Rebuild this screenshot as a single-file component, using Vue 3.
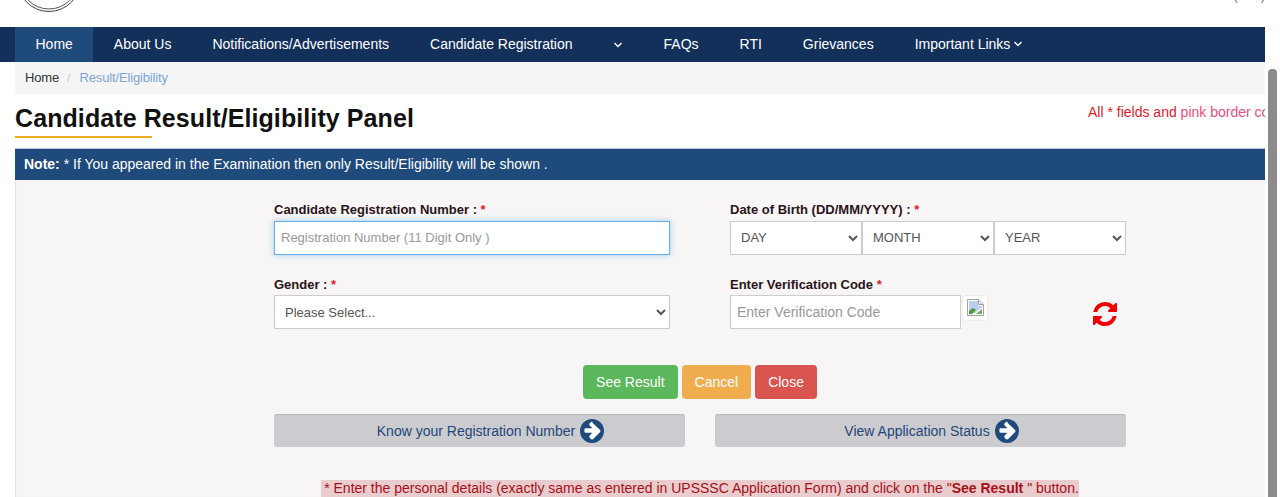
<template>
  <div class="page">
    <div class="content">
      <header class="top">
        <svg class="logo" width="60" height="14" viewBox="0 0 60 14">
          <circle cx="30" cy="-20" r="31.5" fill="none" stroke="#444" stroke-width="1" />
          <circle cx="30" cy="-20" r="29" fill="none" stroke="#555" stroke-width="1" />
        </svg>
        <span class="lang">( A+ )</span>
      </header>

      <nav class="nav">
        <a v-for="item in navItems" :key="item.label" :class="['nav-item', { active: item.active }]">
          {{ item.label }}
        </a>
        <a class="nav-item only-caret">
          <svg class="caret" width="10" height="6" viewBox="0 0 10 6">
            <path d="M1.500 1l3.500 3.500L8.500 1" fill="none" stroke="#fff" stroke-width="1.4" />
          </svg>
        </a>
        <a v-for="item in navItemsEnd" :key="item.label" class="nav-item">
          {{ item.label }}
          <svg v-if="item.caret" class="caret" width="10" height="6" viewBox="0 0 10 6">
            <path d="M1.500 1l3.500 3.500L8.500 1" fill="none" stroke="#fff" stroke-width="1.4" />
          </svg>
        </a>
      </nav>

      <div class="crumbs">
        <span class="crumb-home">Home</span>
        <span class="crumb-sep">/</span>
        <span class="crumb-here">Result/Eligibility</span>
      </div>

      <div class="title-row">
        <div class="title-block">
          <h1>Candidate Result/Eligibility Panel</h1>
        </div>
        <p class="mandatory">All * fields and <span>pink border color are mandatory</span></p>
      </div>

      <div class="note"><b>Note:</b> * If You appeared in the Examination then only Result/Eligibility will be shown .</div>

      <section class="panel">
        <div class="form-grid">
          <div class="field">
            <label>Candidate Registration Number : <i>*</i></label>
            <input class="ctl focused first" type="text" placeholder="Registration Number (11 Digit Only )" />
          </div>
          <div class="field">
            <label>Date of Birth (DD/MM/YYYY) : <i>*</i></label>
            <div class="dob">
              <select v-for="part in dobParts" :key="part" class="ctl first">
                <option>{{ part }}</option>
              </select>
            </div>
          </div>
          <div class="field">
            <label>Gender : <i>*</i></label>
            <select class="ctl">
              <option>Please Select...</option>
            </select>
          </div>
          <div class="field">
            <label>Enter Verification Code <i>*</i></label>
            <div class="captcha">
              <input class="ctl code" type="text" placeholder="Enter Verification Code" />
              <span class="broken">
                <svg width="17" height="17" viewBox="0 0 17 17">
                  <path d="M.5.5h11l5 5v11H.5z" fill="#fff" stroke="#a4a4a4" />
                  <path d="M11.5.5v5h5" fill="#e6e6e6" stroke="#a4a4a4" />
                  <path d="M2 2h9v5h4v1L8 14H2z" fill="#b9cdf1" />
                  <path d="M2 15v-3l4-3 3 2-4 4z" fill="#4c9a3e" />
                  <path d="M9 15l6-5v5z" fill="#6fae5c" />
                </svg>
              </span>
              <svg class="refresh" width="24" height="24" viewBox="0 0 1536 1536">
                <path fill="#f00000" d="M1511 928q0 5-1 7-64 268-268 434.5t-478 166.5q-146 0-282.5-55t-243.5-157l-129 129q-19 19-45 19t-45-19-19-45v-448q0-26 19-45t45-19h448q26 0 45 19t19 45-19 45l-137 137q71 66 161 102t187 36q134 0 250-65t186-179q11-17 53-117 8-23 30-23h192q13 0 22.5 9.5t9.5 22.5zm25-800v448q0 26-19 45t-45 19h-448q-26 0-45-19t-19-45 19-45l138-138q-148-137-349-137-134 0-250 65t-186 179q-11 17-53 117-8 23-30 23h-199q-13 0-22.5-9.5t-9.5-22.5v-7q65-268 270-434.5t480-166.5q146 0 284 55.5t245 156.5l130-129q19-19 45-19t45 19 19 45z" />
              </svg>
            </div>
          </div>
        </div>

        <div class="actions">
          <button class="btn green">See Result</button>
          <button class="btn orange">Cancel</button>
          <button class="btn red">Close</button>
        </div>

        <div class="links">
          <a v-for="link in links" :key="link" class="link-btn">
            {{ link }}
            <svg width="24" height="24" viewBox="0 0 25 25">
              <circle cx="12.5" cy="12.5" r="12.5" fill="#1f4a7c" />
              <path d="M13.500 4.500l7.500 7 .3 1-.3 1-7.500 7.500-1 .3-1-.3-1.600-1.600-.3-1 .3-1 3-3H6l-1-.4-.4-1v-2l.4-1 1-.4h6.900l-3-3-.3-1 .3-1 1.600-1.600 1-.3z" fill="#fff" />
            </svg>
          </a>
        </div>

        <p class="hint">
          <span>* Enter the personal details (exactly same as entered in UPSSSC Application Form) and click on the "<b>See Result</b> " button.</span>
        </p>
      </section>
    </div>
    <div class="scrollbar"></div>
  </div>
</template>

<script setup>
const navItems = [
  { label: 'Home', active: true },
  { label: 'About Us' },
  { label: 'Notifications/Advertisements' },
  { label: 'Candidate Registration' },
];
const navItemsEnd = [
  { label: 'FAQs' },
  { label: 'RTI' },
  { label: 'Grievances' },
  { label: 'Important Links', caret: true },
];
const dobParts = ['DAY', 'MONTH', 'YEAR'];
const links = ['Know your Registration Number', 'View Application Status'];
</script>

<style>
html, body { margin: 0; background: #fff; overflow: hidden; }
</style>

<style scoped>
.page {
  position: relative; width: 1280px; height: 497px; overflow: hidden;
  background: #fff; font-family: "Liberation Sans", Arial, sans-serif; color: #222;
}
.content { width: 1265px; height: 497px; overflow: hidden; }

.top { height: 27px; display: flex; justify-content: space-between; overflow: hidden; }
.logo { margin-left: 19px; }
.lang { margin-top: -12px; font-size: 13px; line-height: 15px; color: #777; height: 15px; white-space: nowrap; }

.nav { height: 35px; box-sizing: border-box; padding: 0 0 0 15px; background: #12305a; display: flex; font-size: 14px; color: #fff; }
.nav-item { display: flex; align-items: center; gap: 3px; padding: 0 20.5px 2px; white-space: nowrap; }
.nav-item.active { background: #1f4a7c; }
.nav-item.only-caret { padding: 0 20px; }

.crumbs {
  margin-left: 15px; height: 32px; box-sizing: border-box; background: #f5f5f5; display: flex; align-items: center;
  padding: 0 0 2px 10px; font-size: 13px; letter-spacing: -0.15px;
}
.crumb-home { color: #333; }
.crumb-sep { color: #ccc; margin: 0 9px 0 8px; }
.crumb-here { color: #7fa3d8; }

.title-row { margin-left: 15px; height: 54px; display: flex; justify-content: space-between; }
.title-block { height: 43px; position: relative; }
.title-block::after {
  content: ""; position: absolute; left: 0; top: 42px; width: 137px; height: 2px; background: #eeaa22;
}
h1 { margin: 0; padding-top: 9px; font-size: 25px; line-height: 30px; font-weight: 700; color: #111; letter-spacing: 0.09px; white-space: nowrap; }
.mandatory { margin: 0; padding-top: 10px; font-size: 14px; line-height: 16px; color: #e2202c; white-space: nowrap; width: 177px; overflow: hidden; flex: none; }
.mandatory span { color: #e5517f; }

.note {
  margin-left: 15px; height: 32px; line-height: 31px; padding-left: 9px;
  background: #1f4a7c; color: #fff; font-size: 14px; border-top: 1px solid #b6c6d6; box-sizing: border-box;
}
.panel {
  margin-left: 15px; height: 317px; background: #f7f5f5; padding: 22px 139px 0 259px; box-sizing: border-box;
  box-shadow: inset 1px 0 1px #e4e2e2;
}

.form-grid { display: grid; grid-template-columns: 396px 396px; column-gap: 60px; row-gap: 22px; }
.field { display: flex; flex-direction: column; }
label { font-size: 13px; font-weight: 700; line-height: 16px; color: #2a1418; margin-bottom: 3px; height: 16px; white-space: nowrap; }
.field:nth-child(n+3) label { margin-bottom: 2px; }
label i { color: #e2202c; font-style: normal; }
.ctl {
  width: 100%; height: 34px; box-sizing: border-box; border: 1px solid #ccc; background: #fff;
  font-family: inherit; font-size: 13px; color: #555; padding: 0 6px; outline: none; border-radius: 0;
}
.ctl.first { padding-bottom: 2px; }
.focused { border-color: #66afe9; box-shadow: 0 0 6px rgba(102,175,233,.6); }
.ctl::placeholder { color: #999; opacity: 1; }
.dob { display: flex; }
.dob select { flex: 1; min-width: 0; }
.captcha { display: flex; align-items: flex-start; }
.code { width: 231px; font-size: 14px; }
.broken {
  width: 26px; height: 26px; box-sizing: border-box; margin-left: 1px; background: #fff; border: 1px solid #eee;
  border-radius: 3px; display: flex; justify-content: center; padding-top: 3px;
}
.refresh { margin: 7px 0 0 105px; }

.actions { display: flex; justify-content: center; gap: 4px; margin-top: 36px; }
.btn {
  height: 34px; border: 0; border-radius: 4px; color: #fff; font-family: inherit; font-size: 14px;
  padding: 0 13px;
}
.green { background: #5cb85c; }
.orange { background: #f0ad4e; }
.red { background: #d9534f; }

.links { display: flex; justify-content: space-between; margin-top: 15px; }
.link-btn {
  width: 411px; height: 33px; box-sizing: border-box; padding-left: 22px; background: #cccbcf; border-radius: 3px;
  box-shadow: inset 0 1px 1px rgba(0,0,0,.1);
  color: #234878; font-size: 14px; display: flex; justify-content: center; align-items: center; gap: 5px; white-space: nowrap;
}
.hint { margin: 33px 0 0; display: flex; justify-content: center; font-size: 14px; line-height: 17px; color: #a60f18; white-space: nowrap; }
.hint span { background: #e9cccd; padding-left: 3px; }

.scrollbar {
  position: absolute; left: 1268px; top: 69px; width: 9px; height: 440px;
  background: #8b8b8b; border-radius: 4px 4px 0 0;
}
</style>
